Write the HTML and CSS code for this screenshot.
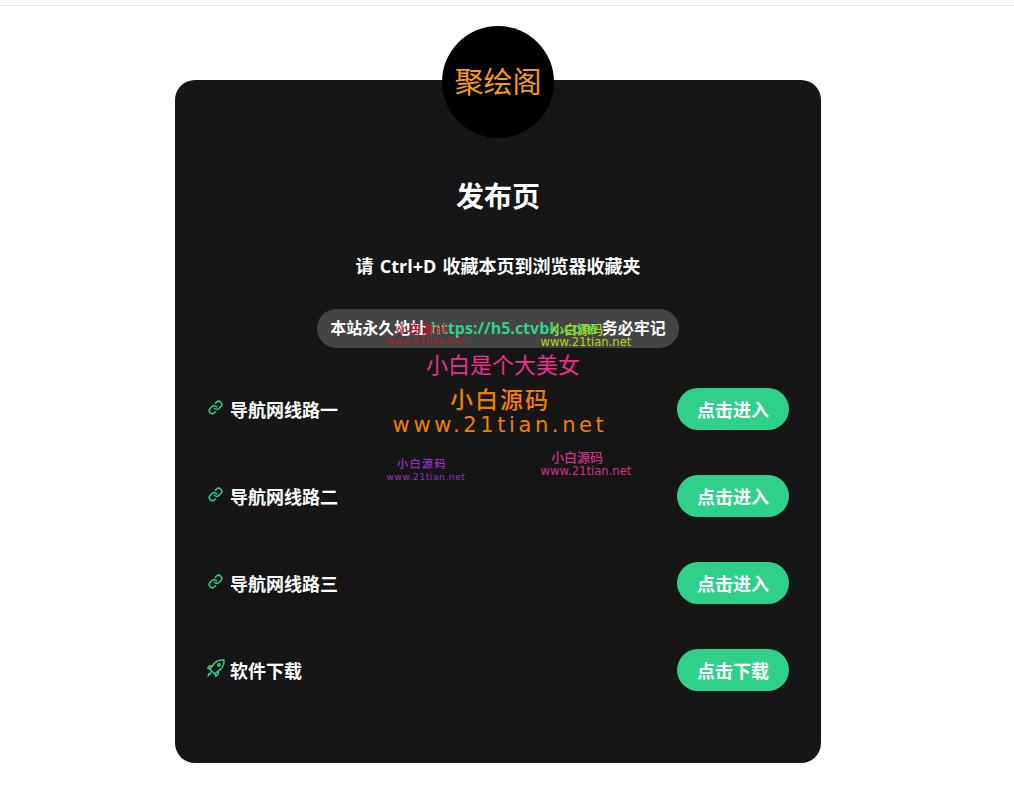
FILE: index.html
```html
<!DOCTYPE html>
<html lang="zh-CN">
<head>
<meta charset="utf-8">
<title>聚绘阁 发布页</title>
<link rel="stylesheet" href="styles.css">
</head>
<body>
<div class="topbar"></div>
<main class="page">
  <section class="card">
    <div class="logo">聚绘阁</div>
    <h1 class="title">发布页</h1>
    <p class="hint">请 Ctrl+D 收藏本页到浏览器收藏夹</p>
    <p class="pill">本站永久地址 <a class="url">https://h5.ctvbk.com</a> 务必牢记</p>
    <ul class="rows">
      <li class="row">
        <span class="label"><svg class="ico" viewBox="0 0 24 24"><path d="M10 13a5 5 0 0 0 7.54.54l3-3a5 5 0 0 0-7.07-7.07l-1.72 1.71"/><path d="M14 11a5 5 0 0 0-7.54-.54l-3 3a5 5 0 0 0 7.07 7.07l1.71-1.71"/></svg>导航网线路一</span>
        <a class="btn">点击进入</a>
      </li>
      <li class="row">
        <span class="label"><svg class="ico" viewBox="0 0 24 24"><path d="M10 13a5 5 0 0 0 7.54.54l3-3a5 5 0 0 0-7.07-7.07l-1.72 1.71"/><path d="M14 11a5 5 0 0 0-7.54-.54l-3 3a5 5 0 0 0 7.07 7.07l1.71-1.71"/></svg>导航网线路二</span>
        <a class="btn">点击进入</a>
      </li>
      <li class="row">
        <span class="label"><svg class="ico" viewBox="0 0 24 24"><path d="M10 13a5 5 0 0 0 7.54.54l3-3a5 5 0 0 0-7.07-7.07l-1.72 1.71"/><path d="M14 11a5 5 0 0 0-7.54-.54l-3 3a5 5 0 0 0 7.07 7.07l1.71-1.71"/></svg>导航网线路三</span>
        <a class="btn">点击进入</a>
      </li>
      <li class="row">
        <span class="label"><svg class="ico rocket" viewBox="0 0 24 24"><path d="M21.5 2.5c.3 4.6-1 8-3.600 10.600l-7.400 6-6-6 6-7.400C13.100 3.100 16.900 2.200 21.500 2.500z"/><path d="M8.200 9.300H4.500L2 12.500h3.500"/><path d="M14.700 15.800v3.700L11.500 22v-3.500"/><path d="M6 17.500l-3.500 4 1-2.700"/><circle cx="15.500" cy="8.500" r="1.500"/></svg>软件下载</span>
        <a class="btn">点击下载</a>
      </li>
    </ul>
    <div class="mark mark-red"><b>小白源码</b><i>www.21tian.net</i></div>
    <div class="mark mark-lime"><b>小白源码</b><i>www.21tian.net</i></div>
    <div class="mark mark-slogan"><b>小白是个大美女</b></div>
    <div class="mark mark-orange"><b>小白源码</b><i>www.21tian.net</i></div>
    <div class="mark mark-purple"><b>小白源码</b><i>www.21tian.net</i></div>
    <div class="mark mark-pink"><b>小白源码</b><i>www.21tian.net</i></div>
  </section>
</main>
</body>
</html>
```
FILE: styles.css
```css
* { box-sizing: border-box; }
html, body { margin: 0; padding: 0; background: #fff; }
body {
  height: 803px;
  overflow: hidden;
  font-family: "Open Sans", "Noto Sans CJK SC", sans-serif;
  color: #fff;
}
.topbar { height: 6px; border-bottom: 1px solid #e5e5e5; }
.page { width: 996px; padding-top: 74px; }
.card {
  position: relative;
  width: 646px;
  height: 683px;
  margin: 0 auto;
  padding: 0 32px;
  background: #161616;
  border-radius: 20px;
}
.logo {
  position: absolute;
  left: 267px;
  top: -54px;
  width: 112px;
  height: 112px;
  border-radius: 50%;
  background: #000;
  color: #f39c12;
  font-size: 29px;
  line-height: 112px;
  text-align: center;
}
.title {
  margin: 0;
  padding-top: 95px;
  font-size: 28px;
  line-height: 42px;
  font-weight: 700;
  text-align: center;
}
.hint {
  margin: 0;
  padding-top: 37px;
  font-size: 18px;
  line-height: 24px;
  font-weight: 700;
  text-align: center;
  word-spacing: 1.500px;
}
.pill {
  width: 362px;
  height: 39px;
  margin: 31px auto 0;
  border-radius: 20px;
  background: #444;
  font-size: 16px;
  line-height: 39px;
  font-weight: 700;
  text-align: center;
  white-space: nowrap;
}
.url { color: #2ed08a; }
.rows {
  list-style: none;
  margin: 40px 0 0;
  padding: 0;
  display: flex;
  flex-direction: column;
  gap: 45px;
}
.row {
  display: flex;
  align-items: center;
  justify-content: space-between;
  height: 42px;
}
.label {
  display: flex;
  align-items: center;
  font-size: 18px;
  font-weight: 700;
}
.ico {
  width: 15px;
  height: 15px;
  margin-left: 1px;
  margin-right: 7px;
  margin-top: -4px;
  fill: none;
  stroke: #2ed08a;
  stroke-width: 2.4;
  stroke-linecap: round;
  stroke-linejoin: round;
}
.rocket { width: 20px; height: 20px; margin-right: 4px; margin-left: -1px; stroke-width: 1.800; }
.btn {
  width: 112px;
  height: 42px;
  border-radius: 21px;
  background: #2ed08a;
  color: #fff;
  font-size: 18px;
  line-height: 44px;
  font-weight: 700;
  text-align: center;
}
.mark {
  position: absolute;
  display: flex;
  flex-direction: column;
  align-items: center;
  font-family: "DejaVu Sans", "Noto Sans CJK SC", sans-serif;
  line-height: 1;
  white-space: nowrap;
}
.mark b { font-weight: 500; font-family: "Noto Sans CJK SC", sans-serif; }
.mark i { font-style: normal; }
.mark-red { left: 209px; top: 243px; width: 84px; color: #c8102a; }
.mark-red b { font-size: 12px; letter-spacing: 1px; margin-right: 8px; }
.mark-red i { font-size: 9px; letter-spacing: .6px; margin-top: 2px; }
.mark-lime { left: 365px; top: 242px; width: 92px; color: #b4d60c; }
.mark-lime b { font-size: 13px; margin-right: 18px; }
.mark-lime i { font-size: 11.600px; margin-top: 2px; }
.mark-slogan { left: 250px; top: 272px; width: 156px; color: #e8308c; }
.mark-slogan b { font-size: 22px; font-weight: 400; }
.mark-orange { left: 218px; top: 307px; width: 214px; color: #f07f00; }
.mark-orange b { font-size: 23px; letter-spacing: 2px; }
.mark-orange i { font-size: 21px; letter-spacing: 3.600px; margin-top: 5px; }
.mark-purple { left: 209px; top: 378px; width: 84px; color: #9a30c8; }
.mark-purple b { font-size: 11px; letter-spacing: 1.500px; margin-right: 8px; }
.mark-purple i { font-size: 9px; letter-spacing: .6px; margin-top: 4px; }
.mark-pink { left: 365px; top: 370px; width: 92px; color: #d0308c; }
.mark-pink b { font-size: 13px; margin-right: 18px; }
.mark-pink i { font-size: 11.600px; margin-top: 3px; }
```
